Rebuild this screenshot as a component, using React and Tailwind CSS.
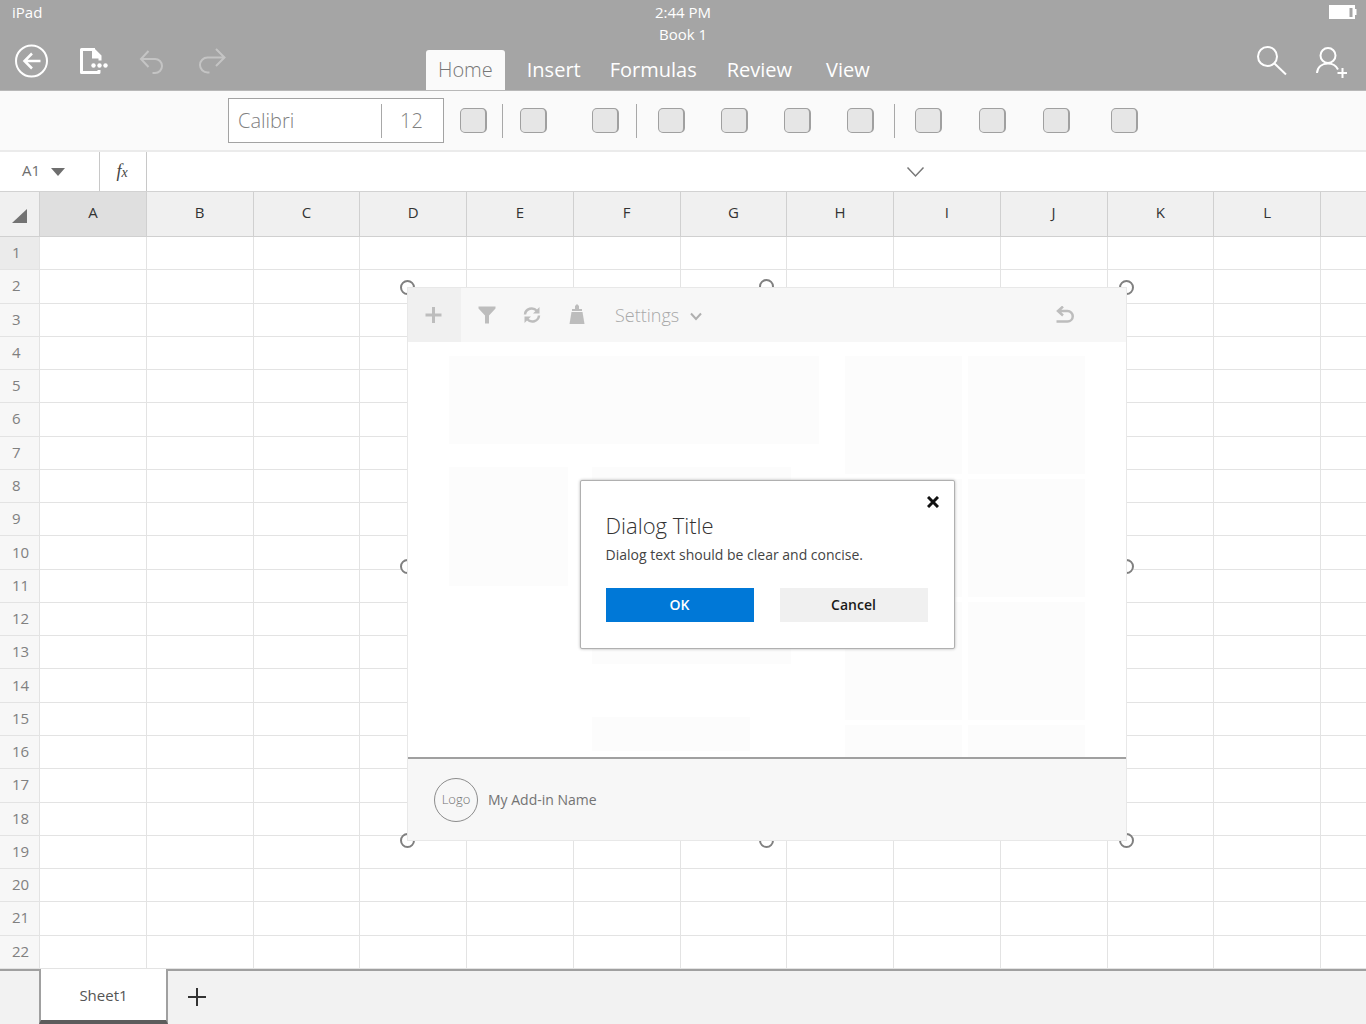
import React from "react";

const COLUMNS = ["A", "B", "C", "D", "E", "F", "G", "H", "I", "J", "K", "L"];
const ROWS = Array.from({ length: 22 }, (_, i) => i + 1);

function StatusBar() {
  return (
    <div className="grid h-[26px] grid-cols-3 items-center px-3 pb-0.5 text-[15px] leading-5">
      <span>iPad</span>
      <span className="text-center">2:44 PM</span>
      <svg className="-mr-[3px] justify-self-end" width="28" height="14" viewBox="0 0 28 14" aria-label="Battery">
        <rect x="0" y="0" width="26" height="14" fill="#fff" />
        <rect x="26" y="4" width="1.500" height="6" fill="#fff" />
        <rect x="20.500" y="3" width="3" height="9" fill="#a5a5a5" />
      </svg>
    </div>
  );
}

function HeaderIcon({ label, children, width = 32, height = 34, className = "" }) {
  return (
    <button aria-label={label} className={`h-[34px] ${className}`}>
      <svg width={width} height={height} viewBox={`0 0 ${width} ${height}`} fill="none" stroke="#fff" strokeWidth="2">
        {children}
      </svg>
    </button>
  );
}

function Tab({ children, active = false, className = "" }) {
  return (
    <button
      role="tab"
      aria-selected={active}
      className={`h-10 rounded-t-[3px] px-3 text-[20px] leading-10 ${active ? "bg-[#fafafa] font-light text-[#777]" : ""} ${className}`}
    >
      {children}
    </button>
  );
}

function Header() {
  return (
    <header className="bg-[#a5a5a5] text-white">
      <StatusBar />
      <h1 className="h-4 text-center text-[15px] leading-4">Book 1</h1>
      <div className="flex h-[49px] justify-between border-b border-[#b8b8b8]">
        <div className="flex w-[426px] shrink-0 gap-7 pt-0.5 pl-[15px]">
          <HeaderIcon label="Back" width={33}>
            <circle cx="16.500" cy="17" r="15.500" />
            <path d="M25.500 17H9.500M17 9.500L9.500 17L17 24.500" strokeWidth="2.500" />
          </HeaderIcon>
          <HeaderIcon label="File">
            <path d="M19 5.500H5.500V28.500H23V26" strokeWidth="3" strokeLinejoin="round" />
            <path d="M16 4H18L25.500 11.500V16.500H22.500V14.500H16Z" fill="#fff" stroke="none" />
            <circle cx="17.500" cy="21.500" r="2.200" fill="#fff" stroke="none" />
            <circle cx="23.500" cy="21.500" r="2.200" fill="#fff" stroke="none" />
            <circle cx="29.500" cy="21.500" r="2.200" fill="#fff" stroke="none" />
          </HeaderIcon>
          <HeaderIcon label="Undo" className="opacity-35">
            <path d="M12.500 7L5 15L12.500 23M5 15H19A7 7 0 0 1 19 29H16.500" />
          </HeaderIcon>
          <HeaderIcon label="Redo" className="opacity-35">
            <path d="M20 5L28.500 13.500L20 22M28.500 13.500H11.500A7.500 7.500 0 0 0 11.500 28.500H13.500" />
          </HeaderIcon>
        </div>
        <nav role="tablist" aria-label="Ribbon" className="flex flex-1 items-end">
          <Tab active>Home</Tab>
          <Tab className="ml-2.5">Insert</Tab>
          <Tab className="ml-[5px]">Formulas</Tab>
          <Tab className="ml-1.5">Review</Tab>
          <Tab className="ml-2.5">View</Tab>
        </nav>
        <div className="flex gap-7 pt-0.5 pr-[19px]">
          <HeaderIcon label="Search">
            <circle cx="12.500" cy="12.500" r="9.500" />
            <path d="M19.500 19.500L31 30.500" />
          </HeaderIcon>
          <HeaderIcon label="Share">
            <circle cx="13" cy="11.500" r="7.500" />
            <path d="M2 29C2.500 23 7 19.500 13 19.500C17.500 19.500 21 21.500 23 25.500" />
            <path d="M27.500 24V34M22.500 29H32" />
          </HeaderIcon>
        </div>
      </div>
    </header>
  );
}

function ToolSquare({ label, className = "" }) {
  return (
    <button
      aria-label={label}
      className={`h-[25px] w-[27px] shrink-0 rounded-[5px] border border-r-2 border-[#a0a0a0] bg-[#e6e6e6] ${className}`}
    />
  );
}

function Separator({ className = "" }) {
  return <div className={`h-[34px] w-px shrink-0 bg-[#a8a8a8] ${className}`} />;
}

function Toolbar() {
  return (
    <div className="flex h-[61px] items-center border-b-2 border-[#ebebeb] bg-[#fafafa] pl-[228px]">
      <div className="flex h-[45px] w-[216px] shrink-0 items-center border border-[#a3a3a3] bg-white text-[20px] font-light text-[#808080]">
        <select aria-label="Font" className="h-full min-w-0 flex-1 appearance-none pl-[9px]">
          <option>Calibri</option>
        </select>
        <Separator />
        <select aria-label="Font size" className="h-full w-[61px] appearance-none pl-[18px]">
          <option>12</option>
        </select>
      </div>
      <ToolSquare label="Tool 1" className="ml-4" />
      <Separator className="mr-[17px] ml-[15px]" />
      <div className="flex gap-[45px]">
        <ToolSquare label="Tool 2" />
        <ToolSquare label="Tool 3" />
      </div>
      <Separator className="mr-[21px] ml-[17px]" />
      <div className="flex gap-9">
        <ToolSquare label="Tool 4" />
        <ToolSquare label="Tool 5" />
        <ToolSquare label="Tool 6" />
        <ToolSquare label="Tool 7" />
      </div>
      <Separator className="mx-5" />
      <div className="flex gap-[37px]">
        <ToolSquare label="Tool 8" />
        <ToolSquare label="Tool 9" />
        <ToolSquare label="Tool 10" />
        <ToolSquare label="Tool 11" className="ml-1" />
      </div>
    </div>
  );
}

function FormulaBar() {
  return (
    <div className="flex h-10 border-b border-[#d2d2d2] bg-white">
      <button className="flex w-[100px] shrink-0 items-center gap-3 border-r border-[#c8c8c8] pb-0.5 pl-[22px] text-[15px] text-[#6e6e6e]">
        A1
        <svg className="mt-0.5 -ml-px" width="14" height="8" viewBox="0 0 14 8" aria-hidden="true">
          <path d="M0 0H14L7 8Z" fill="#6e6e6e" />
        </svg>
      </button>
      <button
        aria-label="Insert function"
        className="w-[47px] shrink-0 border-r border-[#c8c8c8] pr-0.5 font-['Liberation_Serif',serif] text-[18px] text-[#444] italic"
      >
        f<span className="text-[14px]">x</span>
      </button>
      <input aria-label="Formula" className="w-[758px] min-w-0 px-2 outline-none" />
      <button aria-label="Expand formula bar">
        <svg width="22" height="12" viewBox="0 0 22 12" fill="none" stroke="#777" strokeWidth="1.500">
          <path d="M2.500 1.500L10.500 10L18.500 1.500" />
        </svg>
      </button>
    </div>
  );
}

function Sheet() {
  return (
    <table className="h-full w-full table-fixed border-separate border-spacing-0 bg-white text-[15px] leading-5">
      <colgroup>
        <col className="w-10" />
        {COLUMNS.map((c) => (
          <col key={c} />
        ))}
        <col className="w-[45px]" />
      </colgroup>
      <thead>
        <tr className="h-[45px] bg-[#f0f0f0] text-[#333]">
          <th className="border-r border-b border-[#d0d0d0] p-0">
            <svg className="mt-1 ml-3" width="16" height="16" viewBox="0 0 16 16" aria-label="Select all">
              <path d="M15 1V15H0Z" fill="#737373" />
            </svg>
          </th>
          {COLUMNS.map((c) => (
            <th
              key={c}
              scope="col"
              className={`border-r border-b border-[#d0d0d0] p-0 pb-1 font-normal ${c === "A" ? "bg-[#dfdfdf]" : ""}`}
            >
              {c}
            </th>
          ))}
          <th className="border-b border-[#d0d0d0] p-0" />
        </tr>
      </thead>
      <tbody>
        {ROWS.map((r) => (
          <tr key={r}>
            <th
              scope="row"
              className={`border-r border-b border-[#e3e3e3] p-0 pb-0.5 pl-3 text-left font-normal text-[#808080] ${r === 1 ? "bg-[#ebebeb]" : "bg-[#f7f7f7]"}`}
            >
              {r}
            </th>
            {COLUMNS.map((c) => (
              <td key={c} className="border-r border-b border-[#e3e3e3] p-0" />
            ))}
            <td className="border-b border-[#e3e3e3] p-0" />
          </tr>
        ))}
      </tbody>
    </table>
  );
}

function Handle({ className }) {
  return <span className={`absolute size-[15px] rounded-full border-2 border-[#808080] bg-white ${className}`} />;
}

function PaneToolbar() {
  return (
    <div className="flex h-[54px] shrink-0 items-center bg-[#f7f7f7] text-[#bdbdbd]">
      <button aria-label="Add" className="flex h-full w-[53px] items-center justify-center bg-[#f0f0f0] pr-0.5">
        <svg width="17" height="16" viewBox="0 0 17 16" stroke="currentColor" strokeWidth="3">
          <path d="M8.500 0V16M0.500 8H16.500" />
        </svg>
      </button>
      <button aria-label="Filter" className="ml-[17px]">
        <svg width="18" height="18" viewBox="0 0 18 18" fill="currentColor">
          <path d="M0.500 0.500H17.500V2.500L11 9.500V17.500H7V9.500L0.500 2.500Z" />
        </svg>
      </button>
      <button aria-label="Refresh" className="ml-[27px]">
        <svg width="18" height="18" viewBox="0 0 18 18" fill="none" stroke="currentColor" strokeWidth="2.500">
          <path d="M2 8.500C2.500 2.500 10 0.500 14 5" />
          <path d="M16 9.500C15.500 15.500 8 17.500 4 13" />
          <path d="M16.500 1V7.500H10Z" fill="currentColor" stroke="none" />
          <path d="M1.500 17V10.500H8Z" fill="currentColor" stroke="none" />
        </svg>
      </button>
      <button aria-label="Clean" className="ml-7">
        <svg className="-mt-0.5" width="16" height="20" viewBox="0 0 16 20" fill="currentColor">
          <path d="M6 5V2L8 0L10 2V5H13V7H3V5Z" />
          <path d="M2.500 8H13.500L15.500 20H0.500Z" />
        </svg>
      </button>
      <button className="ml-[30px] flex items-center gap-3 text-[18px] leading-6 font-light text-[#a8a8a8]">
        Settings
        <svg className="mt-0.5 -ml-px" width="12" height="9" viewBox="0 0 12 9" fill="none" stroke="#b0b0b0" strokeWidth="2">
          <path d="M1 1.500L6 7L11 1.500" />
        </svg>
      </button>
      <button aria-label="Undo" className="mr-[52px] ml-auto">
        <svg width="19" height="18" viewBox="0 0 19 18" fill="none" stroke="currentColor" strokeWidth="2.500">
          <path d="M8 0.500L3 5L8 9.500M3 5H12.500A5.200 5.200 0 0 1 12.500 15.500H1.500" />
        </svg>
      </button>
    </div>
  );
}

function Block({ className = "" }) {
  return <div className={`bg-[#fcfcfc] ${className}`} />;
}

function PaneContent() {
  return (
    <div className="flex min-h-0 flex-1 justify-between overflow-hidden px-[41px] pt-3.5">
      <div className="w-[370px]">
        <Block className="h-[88px]" />
        <div className="flex gap-6 pt-[23px]">
          <Block className="h-[119px] w-[119px]" />
          <div>
            <Block className="h-[197px] w-[199px]" />
            <Block className="mt-[53px] h-[34px] w-[158px]" />
          </div>
        </div>
      </div>
      <div className="grid w-[240px] grid-cols-2 content-start gap-x-1.5 gap-y-[5px]">
        {ROWS.slice(0, 8).map((n) => (
          <Block key={n} className="h-[118px]" />
        ))}
      </div>
    </div>
  );
}

function Dialog() {
  return (
    <div
      role="dialog"
      aria-labelledby="dialog-title"
      aria-describedby="dialog-text"
      className="relative w-[375px] rounded-[2px] border border-[#b0b0b0] bg-white pt-7 pr-[26px] pb-[26px] pl-[25px] shadow-[0_0_3px_#b0b0b0]"
    >
      <button aria-label="Close" className="absolute top-[15px] right-[15px]">
        <svg width="12" height="12" viewBox="0 0 12 12" stroke="#111" strokeWidth="3">
          <path d="M1 1L11 11M11 1L1 11" />
        </svg>
      </button>
      <h2 id="dialog-title" className="text-[22px] leading-8 font-light text-[#333]">
        Dialog Title
      </h2>
      <p id="dialog-text" className="pt-0.5 text-[14px] leading-6 text-[#444]">
        Dialog text should be clear and concise.
      </p>
      <div className="mt-[21px] grid grid-cols-2 gap-[26px] text-[14px] font-semibold">
        <button className="h-[34px] bg-[#0078d7] text-white">OK</button>
        <button className="h-[34px] bg-[#f0f0f0] text-[#1a1a1a]">Cancel</button>
      </div>
    </div>
  );
}

function AddInPane() {
  return (
    <div className="absolute top-[95px] left-[407px] h-[554px] w-[720px]">
      <Handle className="-top-[7px] -left-[7px]" />
      <Handle className="-top-2 left-[352px]" />
      <Handle className="-top-[7px] -right-[7px]" />
      <Handle className="top-[272px] -left-[7px]" />
      <Handle className="top-[272px] -right-[7px]" />
      <Handle className="-bottom-[7px] -left-[7px]" />
      <Handle className="-bottom-[7px] left-[352px]" />
      <Handle className="-right-[7px] -bottom-[7px]" />
      <section aria-label="My Add-in Name" className="relative flex h-full flex-col border border-[#e8e8e8] bg-white">
        <PaneToolbar />
        <PaneContent />
        <footer className="flex h-[83px] shrink-0 items-center gap-2.5 border-t-2 border-[#a0a0a0] bg-[#f7f7f7] pl-[26px] text-[14px] text-[#737373]">
          <span className="flex size-11 items-center justify-center rounded-full border border-[#8c8c8c] text-[13px] font-light">
            Logo
          </span>
          <span>My Add-in Name</span>
        </footer>
        <div className="absolute inset-0 flex items-center justify-center">
          <Dialog />
        </div>
      </section>
    </div>
  );
}

function SheetTabs() {
  return (
    <footer className="flex h-[55px] shrink-0 bg-[#f2f2f2]">
      <div className="w-[39px] border-t-2 border-[#a0a0a0]" />
      <button className="w-[129px] border-x-2 border-b-4 border-x-[#a0a0a0] border-b-[#5c5c5c] bg-white pt-0.5 text-[15px] text-[#555]">
        Sheet1
      </button>
      <div className="flex-1 border-t-2 border-[#a0a0a0]">
        <button aria-label="New sheet" className="ml-5 flex h-full items-center pb-px">
          <svg width="18" height="18" viewBox="0 0 18 18" stroke="#333" strokeWidth="2">
            <path d="M9 0V18M0 9H18" />
          </svg>
        </button>
      </div>
    </footer>
  );
}

export default function App() {
  return (
    <div className="flex h-screen flex-col overflow-hidden bg-white font-['Open_Sans','Noto_Sans',sans-serif]">
      <Header />
      <Toolbar />
      <FormulaBar />
      <main className="relative min-h-0 flex-1">
        <Sheet />
        <AddInPane />
      </main>
      <SheetTabs />
    </div>
  );
}
